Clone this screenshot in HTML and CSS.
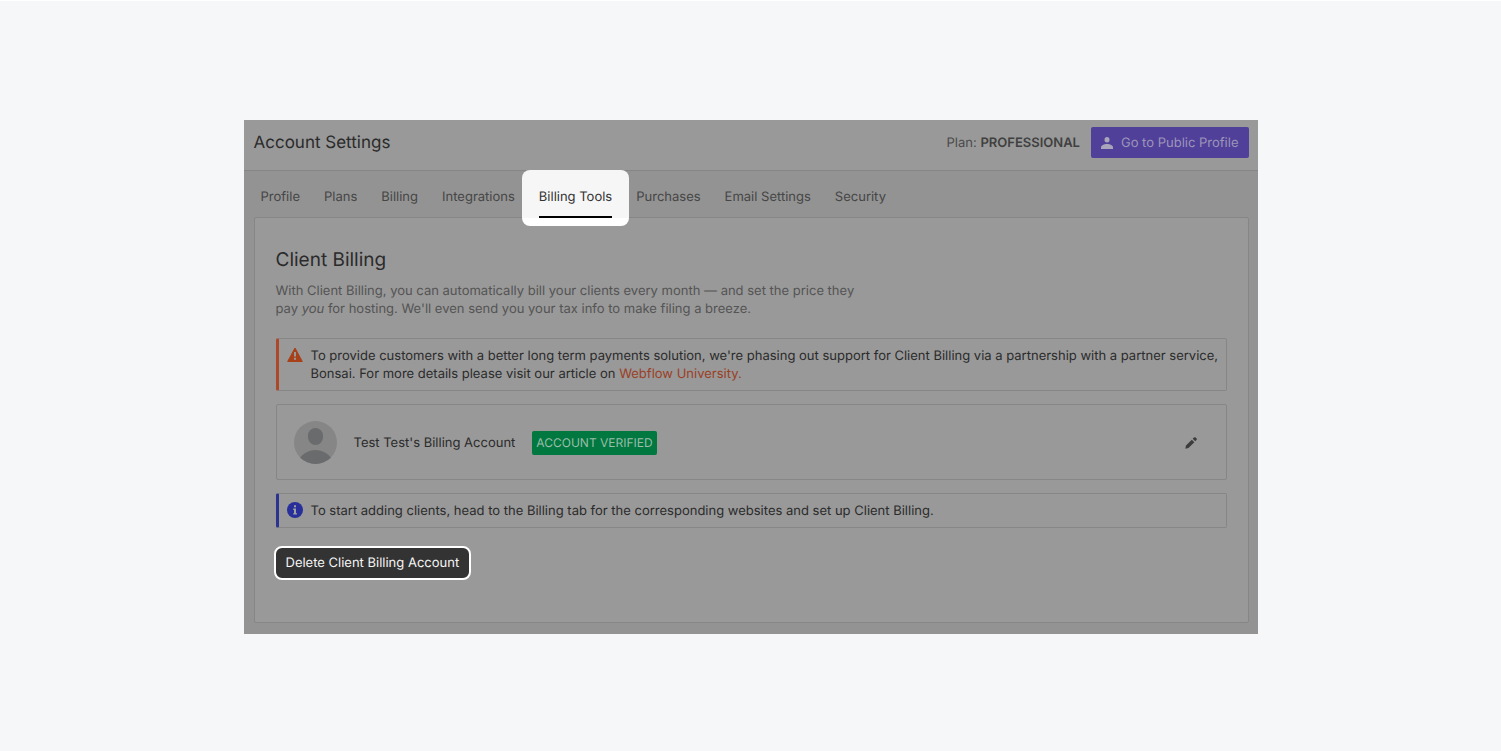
FILE: index.html
```html
<!DOCTYPE html>
<html lang="en">
<head>
<meta charset="utf-8">
<title>Account Settings</title>
<link rel="stylesheet" href="styles.css">
</head>
<body>
<main class="app">
  <header class="topbar">
    <h1 class="topbar-title">Account Settings</h1>
    <p class="plan">Plan: <strong>PROFESSIONAL</strong></p>
    <button class="profile-button" type="button">
      <svg width="12" height="12" viewBox="0 0 12 12" fill="currentColor" aria-hidden="true"><ellipse cx="6" cy="2.7" rx="2.5" ry="2.7"/><path d="M0 12V10.6C0 8.4 3 7 6 7s6 1.400 6 3.600V12z"/></svg>
      Go to Public Profile
    </button>
  </header>
  <nav class="tabs">
    <a class="tab" href="#profile">Profile</a>
    <a class="tab" href="#plans">Plans</a>
    <a class="tab" href="#billing">Billing</a>
    <a class="tab" href="#integrations">Integrations</a>
    <a class="tab tab-active" href="#tools" aria-current="page"><span class="tab-label">Billing Tools</span></a>
    <a class="tab" href="#purchases">Purchases</a>
    <a class="tab" href="#email">Email Settings</a>
    <a class="tab" href="#security">Security</a>
  </nav>
  <section class="panel">
    <h2 class="panel-title">Client Billing</h2>
    <p class="intro">With Client Billing, you can automatically bill your clients every month — and set the price they pay <em>you</em> for hosting. We'll even send you your tax info to make filing a breeze.</p>
    <div class="notice notice-warning">
      <svg class="notice-icon" width="16" height="16" viewBox="0 0 16 16" aria-hidden="true"><path d="M8 1 15.300 14.500H.7z" fill="#a84018" stroke="#a84018" stroke-linejoin="round"/><path d="M7 5h2v4.500H7zM7 10.800h2v2H7z" fill="#999"/></svg>
      <p class="notice-text">To provide customers with a better long term payments solution, we're phasing out support for Client Billing via a partnership with a partner service, Bonsai. For more details please visit our article on <a class="notice-link" href="#university">Webflow University.</a></p>
    </div>
    <div class="account">
      <svg class="avatar" width="43" height="43" viewBox="0 0 43 43" aria-hidden="true"><defs><clipPath id="disc"><circle cx="21.500" cy="21.500" r="21.500"/></clipPath></defs><g clip-path="url(#disc)"><path fill="#868686" d="M0 0h43v43H0z"/><rect x="14" y="7" width="15" height="17" rx="7.500" fill="#696b6c"/><path d="M5 38C9 32 16 29 21.500 29S34 32 38 38V43H5z" fill="#696b6c"/></g></svg>
      <span class="account-name">Test Test's Billing Account</span>
      <span class="badge">ACCOUNT VERIFIED</span>
      <button class="edit-button" type="button" aria-label="Edit">
        <svg width="12" height="12" viewBox="0 0 12 12" fill="#3c3c3c" aria-hidden="true"><path d="M.3 11.700 1 8.500 6.800 2.700l2.500 2.500L3.500 11z"/><path d="M7.700 1.800 8.900.6a1.300 1.300 0 0 1 1.800 0l.7.7a1.300 1.300 0 0 1 0 1.800l-1.200 1.200z"/></svg>
      </button>
    </div>
    <div class="notice notice-info">
      <svg class="notice-icon" width="16" height="16" viewBox="0 0 16 16" aria-hidden="true"><circle cx="8" cy="8" r="8" fill="#282f9b"/><path d="M7 3.200h2v2H7zM6.200 6.500H9v4.700h1v1.400H6.200v-1.400H7V7.900h-.8z" fill="#a0a0a0"/></svg>
      <p class="notice-text">To start adding clients, head to the Billing tab for the corresponding websites and set up Client Billing.</p>
    </div>
    <button class="delete-button" type="button">Delete Client Billing Account</button>
  </section>
</main>
</body>
</html>
```
FILE: styles.css
```css
* { box-sizing: border-box; }
body {
  margin: 0;
  padding: 119px 24px;
  border-top: 1px solid #fff;
  background: #f5f7f9;
  font-family: Inter, "Liberation Sans", sans-serif;
  font-size: 13px;
  line-height: 18px;
  color: #2b2b2b;
  text-rendering: geometricPrecision;
}
h1, h2, p { margin: 0; font-weight: 400; }
button { font: inherit; text-rendering: inherit; border: 0; cursor: pointer; }
a { text-decoration: none; }
.app {
  max-width: 1014px;
  margin: 0 auto;
  padding-bottom: 11px;
  background: #939393;
}
.topbar {
  display: flex;
  align-items: center;
  min-height: 51px;
  padding: 0 9px 5px 10px;
  border-bottom: 1px solid #868686;
  background: #999;
}
.topbar-title {
  margin-right: auto;
  font-size: 17px;
  line-height: 24px;
}
.plan { margin-right: 11px; color: #4a4a4a; }
.plan strong { font-weight: 600; color: #404040; }
.profile-button {
  display: flex;
  align-items: center;
  gap: 8px;
  height: 31px;
  padding: 0 10px;
  border-radius: 2px;
  background: #50409a;
  color: #9c95b8;
}
.profile-button svg { color: #a9a5bb; }
.tabs {
  display: flex;
  gap: 24px;
  padding: 0 17px;
}
.tab {
  height: 46px;
  padding-top: 17px;
  color: #464646;
  white-space: nowrap;
}
.tab-active { position: relative; color: #333; }
.tab-active::before {
  content: "";
  position: absolute;
  inset: -1px -17px -9px;
  border-radius: 8px;
  background: linear-gradient(#f6f6f6 48px, #fff 48px);
}
.tab-label {
  position: relative;
  display: block;
  height: 30px;
  border-bottom: 2px solid #000;
}
.panel {
  margin: 0 9px 0 10px;
  padding: 30px 21px 42px;
  border: 1px solid #868686;
  border-radius: 2px;
  background: #999;
}
.panel-title {
  margin-bottom: 10px;
  font-size: 19px;
  line-height: 24px;
}
.intro { max-width: 590px; margin-bottom: 20px; color: #545454; }
.notice {
  display: flex;
  gap: 8px;
  margin-bottom: 13px;
  padding: 8px 7px 7px 8px;
  border: 1px solid #868686;
  border-left-width: 3px;
  border-radius: 2px;
}
.notice-warning { border-left-color: #ac4928; }
.notice-info { border-left-color: #2b3590; }
.notice-icon { flex: none; }
.notice-link { color: #9b3f25; }
.account {
  display: flex;
  align-items: center;
  margin-bottom: 13px;
  padding: 16px 29px 15px 17px;
  border: 1px solid #868686;
  border-radius: 2px;
}
.account-name { margin: 0 17px; }
.badge {
  padding: 3px 4px;
  border-radius: 2px;
  background: #00783f;
  color: #9bbcaa;
  font-size: 12px;
}
.edit-button {
  display: flex;
  margin-left: auto;
  padding: 0;
  background: none;
}
.delete-button {
  height: 34px;
  margin: 5px 0 0 -2px;
  padding: 0 10px;
  border: 2px solid #fff;
  border-radius: 8px;
  background: #333;
  color: #f5f5f5;
}
```
